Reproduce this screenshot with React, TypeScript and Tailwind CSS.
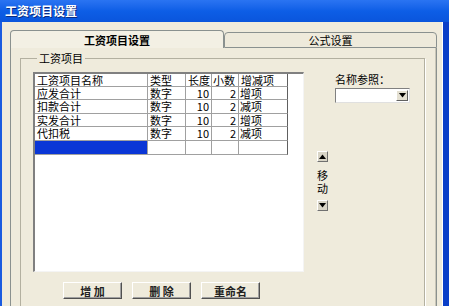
import React from "react";

const FONT = { fontFamily: '"Noto Sans CJK SC", "Noto Sans", sans-serif' };

function Tri({ down }: { down?: boolean }) {
  return (
    <svg width="7" height="5" viewBox="0 0 7 5">
      {down ? <polygon points="0,0 7,0 3.5,4.5" fill="#000" /> : <polygon points="0,5 7,5 3.5,0.5" fill="#000" />}
    </svg>
  );
}

export default function App() {
  const rows = [
    ["应发合计", "数字", "10", "2", "增项"],
    ["扣款合计", "数字", "10", "2", "减项"],
    ["实发合计", "数字", "10", "2", "增项"],
    ["代扣税", "数字", "10", "2", "减项"],
  ];
  const hs = ["h-[13px]", "h-[14px]", "h-[13px]", "h-[14px]"];
  const cell = "border-r border-b border-[#a0a0a0] flex items-center text-[11px] leading-[11px] text-black";

  return (
    <div className="w-[449px] h-[306px] overflow-hidden flex flex-col bg-[#0b54e0]" style={FONT}>
      <div className="h-[22px] shrink-0 flex items-center pl-[5px] bg-gradient-to-b from-[#2a74f2] via-[#0d5ee6] to-[#0a55dc]">
        <span className="text-white font-bold text-[12px] leading-[14px] [text-shadow:1px_1px_0_#0a2a80]">工资项目设置</span>
      </div>
      <div className="flex-1 flex min-h-0">
        <div className="w-[2px] bg-[#1a5be0]" />
        <div className="flex-1 bg-[#efebdc] pt-[8px] pl-[8px] pr-[4px] flex flex-col min-h-0">
          {/* tabs */}
          <div className="flex h-[18px] shrink-0 items-end">
            <div className="w-[214px] h-[18px] border border-b-0 border-[#8a918f] rounded-t-[4px] bg-[#f3f0e4] flex items-center justify-center">
              <span className="text-[11px] leading-[12px] font-bold text-black">工资项目设置</span>
            </div>
            <div className="w-[213px] h-[16px] border border-[#8a918f] rounded-t-[4px] bg-[#eeeadb] flex items-center justify-center">
              <span className="text-[11px] leading-[12px] text-black">公式设置</span>
            </div>
          </div>
          {/* panel */}
          <div className="w-[427px] flex-1 border-l border-r border-[#8a918f] pl-[9px] pr-[11px] pt-[4px] [box-shadow:inset_-1px_0_0_#c9c6b8]">
            <fieldset className="border border-[#b3b0a0] h-[300px] pl-[12px] pr-[4px] [box-shadow:1px_1px_0_#ffffff]">
              <legend className="ml-[4px] px-[2px] text-[11px] leading-[12px] text-black">工资项目</legend>
              <div className="flex mt-[8px]">
                {/* grid */}
                <div className="w-[271px] h-[200px] bg-white border-l-2 border-t-2 border-[#808080] border-r border-b border-r-[#f4f4f4] border-b-[#f4f4f4] flex flex-col">
                  <div className="flex h-[13px]">
                    <div className={`${cell} w-[113px] pl-[2px]`}>工资项目名称</div>
                    <div className={`${cell} w-[38px] pl-[2px]`}>类型</div>
                    <div className={`${cell} w-[26px] pl-[2px]`}>长度</div>
                    <div className={`${cell} w-[27px] pl-[1px]`}>小数</div>
                    <div className={`${cell} w-[49px] pl-[2px] border-r-[#606060]`}>增减项</div>
                  </div>
                  {rows.map((r, i) => (
                    <div key={i} className={`flex ${hs[i]}`}>
                      <div className={`${cell} w-[113px] pl-[2px]`}>{r[0]}</div>
                      <div className={`${cell} w-[38px] pl-[2px]`}>{r[1]}</div>
                      <div className={`${cell} w-[26px] justify-end pr-[2px]`}>{r[2]}</div>
                      <div className={`${cell} w-[27px] justify-end pr-[2px]`}>{r[3]}</div>
                      <div className={`${cell} w-[49px] pl-[1px] border-r-[#606060]`}>{r[4]}</div>
                    </div>
                  ))}
                  <div className="flex h-[14px]">
                    <div className={`${cell} w-[113px] bg-[#0a36d6]`} />
                    <div className={`${cell} w-[38px]`} />
                    <div className={`${cell} w-[26px]`} />
                    <div className={`${cell} w-[27px]`} />
                    <div className={`${cell} w-[49px] border-r-[#606060]`} />
                  </div>
                </div>
                {/* move */}
                <div className="ml-[13px] w-[11px] pt-[79px] flex flex-col items-center">
                  <div className="w-[11px] h-[11px] bg-[#d8d4c6] border border-t-white border-l-white border-r-[#707070] border-b-[#707070] flex items-center justify-center">
                    <Tri />
                  </div>
                  <div className="mt-[7px] text-[11px] leading-[12px] text-black">移</div>
                  <div className="mt-[1px] text-[11px] leading-[12px] text-black">动</div>
                  <div className="mt-[6px] w-[11px] h-[11px] bg-[#d8d4c6] border border-t-white border-l-white border-r-[#707070] border-b-[#707070] flex items-center justify-center">
                    <Tri down />
                  </div>
                </div>
                {/* right */}
                <div className="ml-[7px] flex flex-col pt-[1px]">
                  <div className="text-[11px] leading-[12px] text-black">名称参照：</div>
                  <div className="mt-[3px] w-[75px] h-[15px] bg-white border border-t-[#808080] border-l-[#808080] border-r-[#e0e0e0] border-b-[#e0e0e0] flex justify-end items-center pr-[1px]">
                    <div className="w-[12px] h-[11px] bg-[#e4e0d2] border border-t-white border-l-white border-r-[#606060] border-b-[#606060] flex items-center justify-center">
                      <Tri down />
                    </div>
                  </div>
                </div>
              </div>
              {/* buttons */}
              <div className="flex mt-[10px] pl-[30px] gap-[10px]">
                {["增 加", "删 除", "重命名"].map((t) => (
                  <div key={t} className="w-[59px] h-[17px] bg-[#eeeadb] border border-t-white border-l-white border-r-[#505050] border-b-[#505050] [box-shadow:inset_-1px_-1px_0_#a0a0a0] flex items-center justify-center">
                    <span className="text-[11px] leading-[12px] font-bold text-[#222]">{t}</span>
                  </div>
                ))}
              </div>
            </fieldset>
          </div>
        </div>
        <div className="w-[1px] bg-white" />
        <div className="w-[6px] bg-[#0a3fc8]" />
      </div>
    </div>
  );
}
